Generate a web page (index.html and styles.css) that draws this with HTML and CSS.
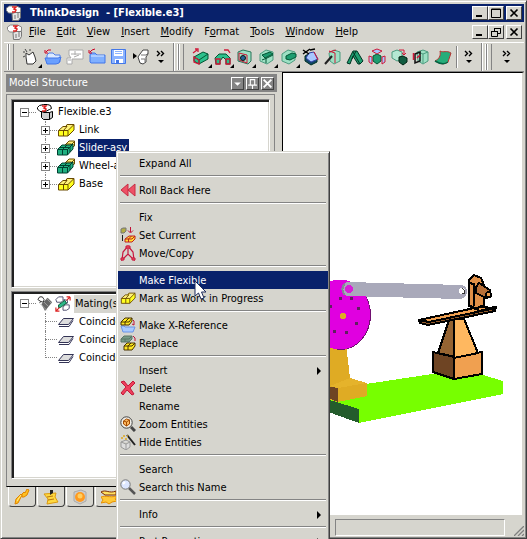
FILE: index.html
```html
<!DOCTYPE html>
<html lang="en">
<head>
<meta charset="utf-8">
<title>ThinkDesign - [Flexible.e3]</title>
<link rel="stylesheet" href="styles.css">
</head>
<body>
<svg class="defs" aria-hidden="true">
  <symbol id="app" viewBox="0 0 16 16"><path d="M.5 5.500V3l3-2h7l4 2v4l-3 1h-9z" fill="#fff" stroke="#888"/><path d="M6 8.500l3-1h5.500v5l-2 3H6.500z" fill="#e4e4e4" stroke="#777"/><path d="M9 10v4M12 8v5" stroke="#777"/><path d="M6 2h4L8 4l2 1-1 2H6" fill="none" stroke="#d22" stroke-width="1.500"/></symbol>
  <symbol id="model" viewBox="0 0 16 16"><path d="M.5 3.500l2-2 4-1h4l3 1 1 3-2 1-4 2H3L.5 5z" fill="#fff" stroke="#000"/><path d="M4.500 7.500v6l2 2h6v-7H7zM12.500 8.500l3-1v6l-3 2" fill="#ccc" stroke="#000"/><path d="M5 2h4L7 4l2 1-1 2H5" fill="none" stroke="#d22" stroke-width="1.500"/></symbol>
  <symbol id="part" viewBox="0 0 18 16"><path d="M1.500 8.500h5L10 3h7v5l-6 6H1.500z" fill="#ffff20" stroke="#6a4a00"/><path d="M1.500 8.500L6 4.500h4l-3.500 4M10 2.500h7l-6 6H2M10 2.500L9 4.500M11 8.500V14M6.500 8.500V14" fill="#fff27a" stroke="#6a4a00"/></symbol>
  <symbol id="asm" viewBox="0 0 18 16"><path d="M8 5l4-4h5.500v5L12 9H8z" fill="#fff27a" stroke="#6a4a00"/><path d="M9 4h5.500M12 7l5-5" stroke="#6a4a00"/><path d="M.5 9.500L5 5h8l3-1v5l-5.500 6H.5z" fill="#20b080" stroke="#004030"/><path d="M1 9.500h9.500L16 4M5.500 15V9.500L10 5M10.500 15V9M3 7.500h9.500M13 12V7" fill="none" stroke="#004030"/></symbol>
  <symbol id="plane" viewBox="0 0 18 16"><path d="M2 12.500h10l4-6" fill="none" stroke="#335"/><path d="M1.500 10.500l5-6h10l-5 6z" fill="#ddd" stroke="#335"/></symbol>
  <symbol id="screw" viewBox="0 0 18 18"><path d="M5 9l7-7 5 5-8 10z" fill="#666"/><path d="M4 9l7 7M7 6l6 6M11 3l5 5" stroke="#aaa"/><path d="M7 7L4 6 1 4 3 1h3l2 3-1 3M4 6l-1 2" fill="#fff" stroke="#222"/></symbol>
  <symbol id="mate" viewBox="0 0 18 18"><path d="M1 4l3-3h5v4L7 7H2zM10 4l4 1v3l-4 1zM9 12l3-2h4v4l-3 2H9z" fill="#fff" stroke="#446"/><path d="M4 10l7-5 2 3-7 5H4z" fill="#2cb888" stroke="#053"/><path d="M13 1h4M17 1v4M13 5l4-4M1 13v4h4M1 17l4-4" stroke="#d22" stroke-width="1.300" fill="none"/></symbol>
  <symbol id="new" viewBox="0 0 18 18"><path d="M4 5l3 2 4-3 2 5 1 4-3 3H5L4 9z" fill="#fff" stroke="#333"/><path d="M1 4h2M3 1l2 3M8 1v2M1 9l2-1" stroke="#444"/></symbol>
  <symbol id="folder" viewBox="0 0 18 18"><path d="M3 14V7l2-2h4l2 2h5v7z" fill="#dceaff" stroke="#5080e8"/><path d="M1 10h13l3-1-2 6-3 1H3z" fill="#6aa0ff" stroke="#4377e8"/><path d="M7 2H4L2 4M1 2v3h3" fill="none" stroke="#c02"/></symbol>
  <symbol id="layout" viewBox="0 0 18 18"><path d="M3 2h14v9H6v5H1v-6h4l-2-3z" fill="#fff" stroke="#aaa"/><path d="M5 6h10M9 3v4M8 9l5-2M2 12h3" stroke="#aaa"/></symbol>
  <symbol id="closef" viewBox="0 0 18 18"><path d="M2 14V7l1-2h4l2 2h8v8H3z" fill="#80b0ff" stroke="#4377e8"/><path d="M3 8h13" stroke="#dceaff"/><path d="M7 1l-3 1-2 2M1 2v3h3" fill="none" stroke="#c02"/></symbol>
  <symbol id="save" viewBox="0 0 18 18"><path d="M1.500 1.500h14v14h-14z" fill="#8cb4ff" stroke="#4377e8"/><path d="M4 2h9v6H4zM5 11h8v4H5z" fill="#fff"/><path d="M5 3.500h7M5 5.500h7" stroke="#8cb4ff"/><path d="M6 12h3v3H6z" fill="#4377e8"/></symbol>
  <symbol id="import" viewBox="0 0 18 18"><path d="M8 6l3-4h5v4l-2 3v5l-3 2-3-1-2-6z" fill="#fff" stroke="#444"/><path d="M9 7h5l2-2M9 11h4v3" fill="none" stroke="#777"/><path d="M1 5l4 3-4 3z"/></symbol>
  <symbol id="extrude" viewBox="0 0 18 18"><path d="M2 9l9-5 5 2v5l-9 5-5-3z" fill="#2cc08c" stroke="#053"/><path d="M2 9l5 3 9-6M7 12v4" fill="none" stroke="#053"/><path d="M2 9l5 3v4l-5-2zM1 5l4-3M3 1h3v3" fill="none" stroke="#d01838" stroke-width="1.300"/></symbol>
  <symbol id="revolve" viewBox="0 0 18 18"><path d="M1 10l4-4h7l4 4v6h-4v-4L9 9l-3 4v3H2z" fill="#2cc08c" stroke="#053"/><path d="M2 11h4v5H2zM12 11h4v5h-4zM10 2h4l2 3" fill="none" stroke="#d01838" stroke-width="1.300"/></symbol>
  <symbol id="hole" viewBox="0 0 18 18"><path d="M2 4l5-2 8 2v9l-3 3-10-3z" fill="#9de0c4" stroke="#287558"/><path d="M3 5l8 2v8l-8-3z" fill="none" stroke="#d01838"/><circle cx="7" cy="10" r="2.500" fill="#269" stroke="#111"/></symbol>
  <symbol id="box" viewBox="0 0 18 18"><path d="M2 6l6-4 7 2v8l-6 4-7-3z" fill="#9de0c4" stroke="#4c9b7f"/><path d="M6 8l6-3 4 1v3l-6 3-4-1z" fill="#1d9c70" stroke="#053"/></symbol>
  <symbol id="slot" viewBox="0 0 18 18"><path d="M2 6l6-4 7 2v8l-6 4-7-3z" fill="#9de0c4" stroke="#4c9b7f"/><path d="M4 7l8-3 3 2-8 4zM8 10v5M4 12l5-2 6-3" fill="#1d9c70" stroke="#053"/></symbol>
  <symbol id="cut" viewBox="0 0 18 18"><path d="M3 8l5-3 7 5v4l-6 3-6-4z" fill="#146" stroke="#032"/><path d="M7 5l5-1 4 7-7 3-5-4z" fill="#a8c8ff" stroke="#34a"/><path d="M1 2l6 4M1 6l7-5M8 2l5-1" stroke="#000" stroke-width="1.500"/><path d="M12 4l4 8" stroke="#d01838"/></symbol>
  <symbol id="wand" viewBox="0 0 18 18"><path d="M5 5l5-3 6 2v9l-6 3-4-3z" fill="#9de0c4" stroke="#4c9b7f"/><path d="M5 3l6 2v10M5 4l7-2" fill="none" stroke="#d01838"/><path d="M1 16l7-8" stroke="#222" stroke-width="2"/></symbol>
  <symbol id="rib" viewBox="0 0 18 18"><path d="M1 15L7 3h4l6 10-3 3h-2L7 8l-3 8z" fill="#1f9e70" stroke="#032"/><path d="M7 4l7 12M10 3l-4 8" stroke="#032"/></symbol>
  <symbol id="pattern" viewBox="0 0 18 18"><path d="M5 8l4-2 4 2v5l-4 3-4-3z" fill="#1d9c70" stroke="#053"/><path d="M4 3l5-2 5 2-5 3zM1 8l3 1v7l-3-2zM17 8l-3 1v7l3-2z" fill="#a8c8ff" stroke="#d01838"/></symbol>
  <symbol id="movebox" viewBox="0 0 18 18"><path d="M2 4l5-2 5 2v7l-5 2-5-3z" fill="#b5e8d3" stroke="#4c9b7f"/><path d="M9 9l4-1 4 2v4l-4 3-4-3z" fill="#115c40" stroke="#021"/><path d="M9 2h5v4M12 5l2 2 2-2" fill="none" stroke="#d01838"/></symbol>
  <symbol id="mirror" viewBox="0 0 18 18"><path d="M5 4l6-2 5 2v9l-5 3-5-3z" fill="#9de0c4" stroke="#4c9b7f"/><path d="M11 6v9M6 4l5 2 5-2" fill="none" stroke="#4c9b7f"/><path d="M3 6l5-2v9l-5 2z" fill="none" stroke="#111" stroke-width="1.500"/><path d="M1.500 5v7M5 10l3-3" stroke="#d01838" stroke-width="1.500"/></symbol>
  <symbol id="sheet" viewBox="0 0 18 18"><path d="M6 3c4 2 6-1 11 2l-3 9c-4 3-8 2-13-1 4-2 6-5 5-10z" fill="#26ad7a" stroke="#b33"/><path d="M1 13c5 3 9 4 13 1" fill="none" stroke="#064" stroke-width="1.500"/></symbol>
  <symbol id="more" viewBox="0 0 10 16"><path d="M1 2l2.500 2.500L1 7M5 2l2.500 2.500L5 7" fill="none" stroke="#000" stroke-width="1.400"/><path d="M2 11h6l-3 3z"/></symbol>
  <symbol id="rollback" viewBox="0 0 16 16"><path d="M8 2v12L1 8zM15 2v12L8 8z" fill="#ee5065" stroke="#c62c43"/></symbol>
  <symbol id="current" viewBox="0 0 16 16"><path d="M1 2l2-1h3v3L4 6H1z" fill="#b3ad45" stroke="#777"/><path d="M2.500 8v6" stroke="#222"/><path d="M10.500 0v5M8 3.500L10.500 6 13 3.500" stroke="#c01035" fill="none"/><path d="M5 12l4-3h6v3l-3 3H5z" fill="#ffe030" stroke="#c02020"/><path d="M8.500 15v-3l3-3M5 12h7l3-3" fill="none" stroke="#c02020"/></symbol>
  <symbol id="move" viewBox="0 0 16 16"><path d="M8 1L3 7l-1 8 6-6 6 6-1-8zM8 2v7" fill="none" stroke="#c8153d" stroke-width="1.200"/><path d="M6 1h4v2H6zM1 13h3v2H1zM12 13h3v2h-3z" fill="#e66" stroke="#c8153d"/></symbol>
  <symbol id="xref" viewBox="0 0 16 16"><path d="M1 9h3l1 1h10l-2 5H3z" fill="#a8caff" stroke="#6a94e6"/><path d="M1 5l4-4h7v3L9 8H1z" fill="#ffe820" stroke="#4a3500"/><path d="M1 5h8l3-4M5 8V5l4-4" fill="none" stroke="#4a3500"/><path d="M13 3l1 1v4l-2-1" fill="none" stroke="#c01035"/></symbol>
  <symbol id="replace" viewBox="0 0 16 16"><path d="M1 4l3-3h8v3L9 7H1z" fill="#779a86" stroke="#587565"/><path d="M1 4h8l3-3M5 7V4" fill="none" stroke="#587565"/><path d="M4 11l3-3h8v3l-3 4H4z" fill="#ffe820" stroke="#4a3500"/><path d="M4 11h8l3-3M8 15v-4l3-3" fill="none" stroke="#4a3500"/><path d="M13 1l2 2v3" fill="none" stroke="#c01035"/></symbol>
  <symbol id="delete" viewBox="0 0 16 16"><path d="M1 2l3-1 4 5 5-5 2 2-5 5 4 6-2 1-5-5-4 5-2-2 5-6z" fill="#ee405c" stroke="#c21838"/></symbol>
  <symbol id="zooment" viewBox="0 0 16 16"><path d="M11 11l4 4" stroke="#444" stroke-width="3"/><circle cx="6.500" cy="6.500" r="5.700" fill="#f0eee8" stroke="#444"/><path d="M3.500 5l3-2 3 1v4l-3 2-3-2z" fill="#ffb95f" stroke="#a44c00"/><path d="M3.500 5l3 1 3-2M6.500 6v4" fill="none" stroke="#a44c00"/></symbol>
  <symbol id="hide" viewBox="0 0 16 16"><path d="M1 8l5-2 4 2v5l-4 3-5-3zM1 8l5 2 4-2M6 10v6" fill="#ddd" stroke="#999"/><path d="M7 1l8 10" stroke="#222" stroke-width="2"/><path d="M1 4h2M4 1v2M5 5h2M7 2h1" stroke="#dda820" stroke-width="1.500"/></symbol>
  <symbol id="search" viewBox="0 0 16 16"><path d="M9 9l6 6" stroke="#555" stroke-width="2.500"/><circle cx="5.500" cy="5.500" r="4.700" fill="#dce6ff" stroke="#777"/><path d="M3 5l2-2" stroke="#fff" stroke-width="2"/></symbol>
  <symbol id="t1" viewBox="0 0 16 16"><path d="M1 15l1-5 5-5 1 1-4 8zM8 5l2-2 1 1 2-4 2 1-2 5-3 2-2 0z" fill="#ffc020" stroke="#e08400"/><path d="M3 12l4-6" fill="none" stroke="#fff08a"/></symbol>
  <symbol id="t2" viewBox="0 0 16 16"><path d="M1 5l12-1-1 4 3 5-11 2 1-5z" fill="#ffd940" stroke="#dc9a10"/><path d="M4 8l6-1M5 11l6-1" stroke="#b97512"/><path d="M7 1h3v3L7 6z" fill="#222"/></symbol>
  <symbol id="t3" viewBox="0 0 16 16"><path d="M2 3l7-2 5 2v9l-6 3-6-3z" fill="#ccc" stroke="#aaa"/><circle cx="8" cy="8" r="5" fill="#ff9a20"/><circle cx="8" cy="7" r="2.500" fill="#ffd060"/></symbol>
  <symbol id="t4" viewBox="0 0 16 16"><path d="M0 8c5-2 8 1 16-1l-2 3 2 2-5 1-3 2-3-2-5 1 2-3z" fill="#ffc838" stroke="#e79100"/><path d="M0 3c5-3 8 2 15-1v4H4z" fill="#ffe060" stroke="#7b2800"/></symbol>
  <symbol id="drop" viewBox="0 0 10 10"><path d="M2 4h6L5 7z" fill="#fff"/></symbol>
  <symbol id="pin" viewBox="0 0 10 10"><path d="M3 1v5M7 1v5M1 6.500h8M3 1.500h4M5 7v3" fill="none" stroke="#fff"/></symbol>
  <symbol id="x" viewBox="0 0 10 10"><path d="M1.500 1.500l7 7M8.500 1.500l-7 7" stroke="currentColor" stroke-width="1.700"/></symbol>
  <symbol id="min" viewBox="0 0 10 10"><path d="M1 7h6v2H1z"/></symbol>
  <symbol id="max" viewBox="0 0 10 10"><path d="M.5 1h9v8.500h-9zM.5 1.500h9" fill="none" stroke="#000"/></symbol>
  <symbol id="restore" viewBox="0 0 10 10"><path d="M3.500 4V1.500h6v5H7M3 1.500h7M.5 4.500h6v5h-6zM0 4.500h7" fill="none" stroke="#000"/></symbol>
</svg>

<div class="window">
  <header class="titlebar">
    <svg class="ico16"><use href="#app"/></svg>
    <h1>ThinkDesign&nbsp; - [Flexible.e3]</h1>
    <div class="winbtns">
      <button aria-label="Minimize"><svg><use href="#min"/></svg></button>
      <button aria-label="Maximize"><svg><use href="#max"/></svg></button>
      <button class="apart" aria-label="Close"><svg><use href="#x"/></svg></button>
    </div>
  </header>
  <nav class="menubar">
    <svg class="ico16"><use href="#app"/></svg>
    <button><u>F</u>ile</button><button><u>E</u>dit</button><button><u>V</u>iew</button><button><u>I</u>nsert</button><button><u>M</u>odify</button><button>F<u>o</u>rmat</button><button><u>T</u>ools</button><button><u>W</u>indow</button><button><u>H</u>elp</button>
    <div class="winbtns">
      <button aria-label="Minimize document"><svg><use href="#min"/></svg></button>
      <button aria-label="Restore document"><svg><use href="#restore"/></svg></button>
      <button class="apart" aria-label="Close document"><svg><use href="#x"/></svg></button>
    </div>
  </nav>
  <div class="toolbars">
    <div class="band">
      <i class="grip"></i>
      <button class="fly" aria-label="New"><svg><use href="#new"/></svg></button>
      <button aria-label="Open"><svg><use href="#folder"/></svg></button>
      <button aria-label="Layout"><svg><use href="#layout"/></svg></button>
      <button aria-label="Close file"><svg><use href="#closef"/></svg></button>
      <button aria-label="Save"><svg><use href="#save"/></svg></button>
      <button aria-label="Import"><svg><use href="#import"/></svg></button>
      <button class="more" aria-label="More file tools"><svg><use href="#more"/></svg></button>
    </div>
    <div class="band">
      <i class="grip"></i>
      <button class="fly" aria-label="Extrude"><svg><use href="#extrude"/></svg></button>
      <button class="fly" aria-label="Revolve"><svg><use href="#revolve"/></svg></button>
      <button class="fly" aria-label="Hole"><svg><use href="#hole"/></svg></button>
      <button class="fly" aria-label="Slot"><svg><use href="#slot"/></svg></button>
      <button class="fly" aria-label="Pocket"><svg><use href="#box"/></svg></button>
      <button aria-label="Trim"><svg><use href="#cut"/></svg></button>
      <button aria-label="Edit solid"><svg><use href="#wand"/></svg></button>
      <button aria-label="Rib"><svg><use href="#rib"/></svg></button>
      <button aria-label="Pattern"><svg><use href="#pattern"/></svg></button>
      <button aria-label="Move solid"><svg><use href="#movebox"/></svg></button>
      <button aria-label="Mirror"><svg><use href="#mirror"/></svg></button>
      <button aria-label="Surface"><svg><use href="#sheet"/></svg></button>
      <i class="rule"></i>
      <button class="more" aria-label="More solid tools"><svg><use href="#more"/></svg></button>
    </div>
    <div class="band last">
      <i class="grip"></i>
      <button class="more" aria-label="More tools"><svg><use href="#more"/></svg></button>
    </div>
  </div>

  <div class="work">
    <aside class="side">
      <div class="panelhead">
        <h2>Model Structure</h2>
        <button aria-label="Panel options"><svg><use href="#drop"/></svg></button>
        <button aria-label="Pin panel"><svg><use href="#pin"/></svg></button>
        <button aria-label="Close panel"><svg><use href="#x"/></svg></button>
      </div>
      <div class="frame">
        <div class="well">
          <div class="row"><button class="exp" aria-label="Collapse"></button><i class="dots"></i><svg><use href="#model"/></svg><span>Flexible.e3</span></div>
          <ul>
            <li class="row"><button class="exp plus" aria-label="Expand"></button><i class="dots"></i><svg><use href="#part"/></svg><span>Link</span></li>
            <li class="row"><button class="exp plus" aria-label="Expand"></button><i class="dots"></i><svg><use href="#asm"/></svg><span class="sel">Slider-asy</span></li>
            <li class="row"><button class="exp plus" aria-label="Expand"></button><i class="dots"></i><svg><use href="#asm"/></svg><span>Wheel-asy</span></li>
            <li class="row"><button class="exp plus" aria-label="Expand"></button><i class="dots"></i><svg><use href="#part"/></svg><span>Base</span></li>
          </ul>
        </div>
        <div class="well">
          <div class="row"><button class="exp" aria-label="Collapse"></button><i class="dots"></i><svg><use href="#screw"/></svg><svg><use href="#mate"/></svg><span class="dim">Mating(s)</span></div>
          <ul class="leaves">
            <li class="row"><i class="dots"></i><svg><use href="#plane"/></svg><span>Coincidence</span></li>
            <li class="row"><i class="dots"></i><svg><use href="#plane"/></svg><span>Coincidence</span></li>
            <li class="row"><i class="dots"></i><svg><use href="#plane"/></svg><span>Coincidence</span></li>
          </ul>
        </div>
      </div>
      <div class="tabs">
        <button aria-label="Model"><svg class="ico16"><use href="#t1"/></svg></button>
        <button aria-label="Notes"><svg class="ico16"><use href="#t2"/></svg></button>
        <button aria-label="Render"><svg class="ico16"><use href="#t3"/></svg></button>
        <button aria-label="Layers"><svg class="ico16"><use href="#t4"/></svg></button>
      </div>
    </aside>
    <main class="view">
      <svg width="238" height="440" viewBox="283 74 238 440" shape-rendering="crispEdges" role="img" aria-label="Crank mechanism">
        <path d="M320 392L432 375l48 0 23 7v13l-144 29-39-14z" fill="#7f0"/>
        <path d="M320 398l39 12v14l-39-14z" fill="#245c2c"/>
        <path d="M320 345h26l4 34 17 5v13l-29 6-18-5z" fill="#dfab24"/>
        <path d="M320 386l18 3v14l-18-7z" fill="#6e4423"/><path d="M330 387l20-8 17 5-29 5z" fill="#e5b32b"/>
        <ellipse cx="341" cy="316" rx="30" ry="35" fill="#701070"/>
        <ellipse cx="340" cy="315.500" rx="30" ry="35" fill="#e000e0"/>
        <path d="M339 298h3v3h-3zM350 298h3v3h-3zM357 308h3v3h-3zM355 323h3v3h-3zM345 332h3v3h-3zM333 331h3v3h-3zM330 306h2v3h-2z" fill="#602060"/>
        <circle cx="343" cy="317" r="3" fill="#dfab24"/>
        <path d="M347 283l115 3c7 2 7 13-2 14l-113-3c-7-2-7-13 0-14z" fill="#a9a9ba"/>
        <circle cx="349" cy="290" r="4" fill="#d81ed8"/><path d="M345 285c-4 3-3 8 0 11" fill="none" stroke="#85859a" stroke-width="2"/>
        <circle cx="462" cy="292" r="3" fill="#fff"/><path d="M462 289l2 2v3h-2" fill="none" stroke="#333"/>
        <g stroke="#000" stroke-width="2" stroke-linejoin="round">
          <path d="M433 353l21 5v22l-21-7z" fill="#6e4423"/>
          <path d="M454 358l28-5v22l-28 5z" fill="#f0a050"/>
          <path d="M449 321h6v37l-17-4z" fill="#966432"/>
          <path d="M454 320h10l14 34-24 5z" fill="#ffb860"/>
          <path d="M419 321l53-10 24-3-1 4-67 14-8-2z" fill="#905828"/>
          <path d="M419 321l60-13 17 1-67 14z" fill="#f0a050"/>
          <path d="M469 307v-26l5-5 7 3 3 7v20l-9 4z" fill="#e09048"/>
          <path d="M469 284l5 1v22" fill="none"/>
          <path d="M476 288l3-4 11 7v7l-4 1-10-5z" fill="#b87038"/>
          <circle cx="488.500" cy="295.500" r="2.500" fill="#f0a050"/>
          <path d="M469 306l11 6 10-3" fill="none"/>
        </g>
      </svg>
    </main>
  </div>
  <footer class="status"><div class="field"></div><svg class="size" viewBox="0 0 10 10"><path d="M0 10L10 0M4 10l6-6M8 10l2-2" stroke="#808080" stroke-width="1.300"/></svg></footer>
</div>

<div class="context" role="menu">
  <button role="menuitem">Expand All</button>
  <hr>
  <button role="menuitem"><svg><use href="#rollback"/></svg>Roll Back Here</button>
  <hr>
  <button role="menuitem">Fix</button>
  <button role="menuitem"><svg><use href="#current"/></svg>Set Current</button>
  <button role="menuitem"><svg><use href="#move"/></svg>Move/Copy</button>
  <hr>
  <button role="menuitem" class="sel">Make Flexible</button>
  <button role="menuitem"><svg viewBox="0 0 18 16"><use href="#part"/></svg>Mark as Work in Progress</button>
  <hr>
  <button role="menuitem"><svg><use href="#xref"/></svg>Make X-Reference</button>
  <button role="menuitem"><svg><use href="#replace"/></svg>Replace</button>
  <hr>
  <button role="menuitem" class="sub">Insert</button>
  <button role="menuitem"><svg><use href="#delete"/></svg>Delete</button>
  <button role="menuitem">Rename</button>
  <button role="menuitem"><svg><use href="#zooment"/></svg>Zoom Entities</button>
  <button role="menuitem"><svg><use href="#hide"/></svg>Hide Entities</button>
  <hr>
  <button role="menuitem">Search</button>
  <button role="menuitem"><svg><use href="#search"/></svg>Search this Name</button>
  <hr>
  <button role="menuitem" class="sub">Info</button>
  <hr>
  <button role="menuitem" class="sub">Part Properties</button>
</div>
<svg class="cursor" viewBox="0 0 13 20"><path d="M1 1v15l3.500-3 2.500 6 3-1-2.500-6H12z" fill="#fff" stroke="#1c2b5c"/></svg>
</body>
</html>
```

FILE: styles.css
```css
* { box-sizing: border-box; }
:root { --face: #d6d5ce; --navy: #08216b; --gray: #848484; --dark: #404040; }
body {
  margin: 0;
  height: 100vh;
  overflow: hidden;
  position: relative;
  background: #fff;
  color: #000;
  font: 11px/18px Tahoma, "DejaVu Sans Condensed", "DejaVu Sans", sans-serif;
}
button { font: inherit; color: inherit; background: none; border: 0; padding: 0; margin: 0; }
h1, h2, ul { margin: 0; padding: 0; font-size: inherit; list-style: none; }
svg { display: block; flex: none; }
.defs { position: absolute; width: 0; height: 0; }
.ico16 { width: 16px; height: 16px; }

.window {
  height: 100vh;
  display: flex;
  flex-direction: column;
  background: var(--face);
  border: 1px solid var(--face);
  border-right-color: var(--dark);
  border-bottom-color: var(--dark);
  box-shadow: inset 1px 1px #fff, inset -1px -1px var(--gray);
  padding: 3px 2px 1px 3px;
}

.titlebar { display: flex; align-items: center; height: 18px; background: var(--navy); color: #fff; padding: 0 2px; gap: 8px; }
.titlebar h1 { font-weight: bold; flex: 1; white-space: nowrap; }
.menubar { display: flex; align-items: center; height: 20px; padding: 0 2px 0 3px; }
.menubar > button { padding: 0 5px 0 6px; }
.menubar .winbtns { margin-left: auto; }
.winbtns { display: flex; }
.winbtns button {
  width: 16px; height: 14px; padding: 1px 2px;
  color: #000;
  background: var(--face);
  border: 1px solid #fff;
  border-right-color: var(--dark);
  border-bottom-color: var(--dark);
}
.winbtns svg { width: 10px; height: 10px; }
.winbtns .apart { margin-left: 2px; }

.toolbars { display: flex; height: 30px; border-top: 1px solid #fff; border-bottom: 1px solid var(--gray); flex: none; }
.band { display: flex; align-items: center; padding: 0 3px 0 4px; border-right: 1px solid var(--gray); box-shadow: 1px 0 #fff; }
.band.last { flex: 1; border: 0; box-shadow: none; }
.grip { width: 6px; height: 26px; border: solid var(--gray); border-width: 0 1px; box-shadow: inset 1px 0 #fff, -1px 0 #fff; margin-right: 6px; }
.band button { position: relative; width: 22px; height: 22px; display: grid; place-items: center; }
.band svg { width: 18px; height: 18px; }
.band .more { width: 18px; }
.band .more svg { width: 10px; height: 16px; }
.fly::after { content: ""; position: absolute; right: 0; bottom: 0; border: 2px solid; border-color: transparent #000 #000 transparent; }
.rule { width: 2px; height: 22px; background: var(--gray); border-right: 1px solid #fff; margin: 0 2px; }

.work { flex: 1; display: flex; min-height: 0; }
.side { width: 278px; display: flex; flex-direction: column; padding: 2px 5px 10px 2px; }
.panelhead { display: flex; align-items: center; height: 18px; background: var(--gray); color: #fff; padding: 0 3px; gap: 2px; }
.panelhead h2 { flex: 1; font-weight: normal; }
.panelhead button { width: 13px; height: 13px; border: 1px solid #fff; border-right-color: var(--dark); border-bottom-color: var(--dark); }
.panelhead svg { width: 11px; height: 11px; }
.frame { flex: 1; display: flex; flex-direction: column; gap: 3px; margin: 2px 2px 0 0; padding: 4px 4px 7px; border: 1px solid var(--gray); border-bottom-color: #000; min-height: 0; }
.well {
  flex: 1;
  overflow: hidden;
  padding: 3px 5px 0;
  background: #fff;
  border: 1px solid var(--gray);
  border-right-color: #fff;
  border-bottom-color: #fff;
  box-shadow: inset 2px 2px #202020, inset -1px -1px var(--face);
}
.row { display: flex; align-items: center; height: 18px; padding-left: 3px; white-space: nowrap; }
.row svg { width: 18px; height: 16px; }
.row span { padding: 0 2px 0 1px; margin-left: 3px; }
.row .sel { background: var(--navy); color: #fff; }
.row .dim { background: var(--face); margin-left: 2px; }
.exp { position: relative; width: 9px; height: 9px; border: 1px solid var(--gray); background: linear-gradient(#000, #000) center / 5px 1px no-repeat #fff; }
.exp.plus { background: linear-gradient(#000, #000) center / 5px 1px no-repeat, linear-gradient(#000, #000) center / 1px 5px no-repeat, #fff; }
.dots { width: 7px; border-top: 1px dotted var(--gray); }
.well ul { margin-left: 21px; }
.well li { position: relative; }
.well li::before { content: ""; position: absolute; left: 7px; top: 0; height: 18px; border-left: 1px dotted var(--gray); }
.well li:last-child::before { height: 9px; }
.leaves .dots { width: 12px; margin-left: 4px; }

.tabs { display: flex; padding-left: 2px; }
.tabs button { width: 28px; height: 20px; display: grid; place-items: center; margin-right: 1px; border: 1px solid #fff; border-top: 0; border-right-color: var(--dark); border-bottom-color: var(--dark); border-radius: 0 0 4px 4px; }

.view { flex: 1; overflow: hidden; display: flex; background: #fff; border: 1px solid #000; border-right: 2px solid var(--face); border-bottom: 2px solid var(--face); }
.status { display: flex; justify-content: flex-end; height: 20px; padding: 2px 0 1px; gap: 9px; flex: none; }
.field { width: 170px; border: 1px solid var(--gray); border-right-color: #fff; border-bottom-color: #fff; }
.size { width: 10px; height: 10px; align-self: flex-end; }

.context {
  position: absolute;
  left: 116px;
  top: 151px;
  width: 214px;
  padding: 2px 1px;
  background: var(--face);
  border: 1px solid var(--face);
  border-right-color: var(--dark);
  border-bottom-color: var(--dark);
  box-shadow: inset 1px 1px #fff, inset -1px 0 var(--gray);
}
.context button { position: relative; display: flex; align-items: center; width: 100%; height: 18px; padding: 2px 0 0 21px; white-space: nowrap; }
.context button svg { position: absolute; left: 2px; top: 1px; width: 16px; height: 16px; }
.context .sel { background: var(--navy); color: #fff; }
.context .sub::after { content: ""; margin-left: auto; margin-right: 7px; border: 4px solid transparent; border-left-color: #000; border-right: 0; }
.context hr { margin: 3px 2px 4px; height: 2px; border: 0; background: var(--gray); border-bottom: 1px solid #fff; }
.cursor { position: absolute; left: 194px; top: 280px; width: 13px; height: 20px; }
```
